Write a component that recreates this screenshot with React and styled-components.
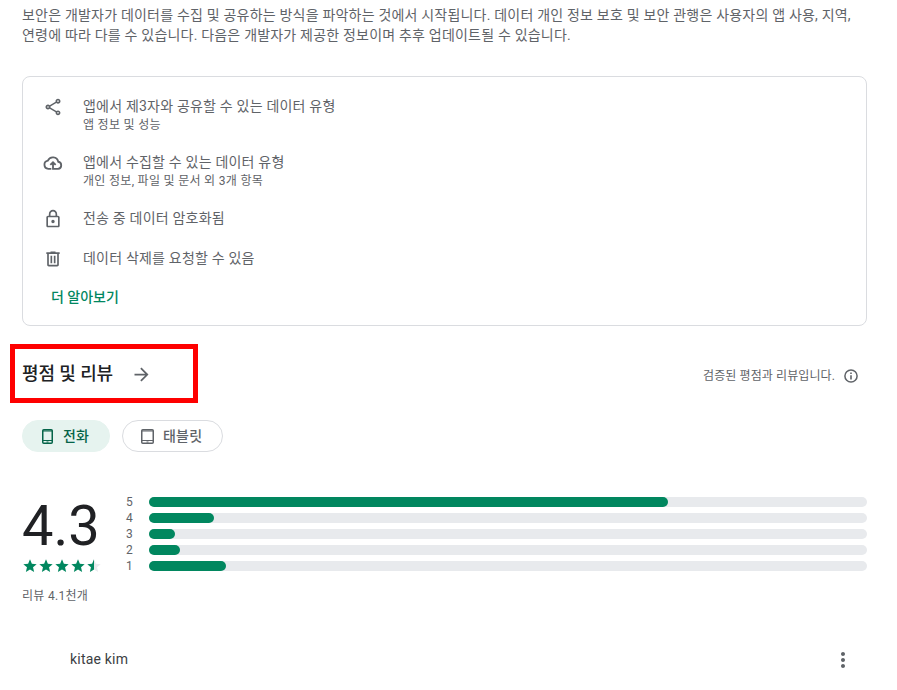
import React from "react";
import styled, { createGlobalStyle } from "styled-components";
import { MdArrowForward, MdMoreVert, MdOutlineShare } from "react-icons/md";

const CloudIcon = () => (
  <svg viewBox="0 0 24 24">
    <path
      d="M10 19H6.4a5 5 0 0 1-.6-9.9A6.6 6.6 0 0 1 18.3 10.500a4.300 4.300 0 0 1-.2 8.500H12v-7.500M8.800 14.300 12 11.100l3.200 3.200"
      fill="none"
      stroke="currentColor"
      strokeWidth="2.200"
    />
  </svg>
);

const LockIcon = () => (
  <svg viewBox="0 0 24 24">
    <path d="M18 8h-1V6c0-2.760-2.240-5-5-5S7 3.240 7 6v2H6c-1.100 0-2 .9-2 2v10c0 1.100.9 2 2 2h12c1.100 0 2-.9 2-2V10c0-1.100-.9-2-2-2zM9 6c0-1.660 1.340-3 3-3s3 1.340 3 3v2H9V6zm9 14H6V10h12v10zm-6-3c1.100 0 2-.9 2-2s-.9-2-2-2-2 .9-2 2 .9 2 2 2z" />
  </svg>
);

const TrashIcon = () => (
  <svg viewBox="0 0 24 24">
    <path d="M15 4V3H9v1H4v2h1v13c0 1.100.9 2 2 2h10c1.100 0 2-.9 2-2V6h1V4h-5zm2 15H7V6h10v13zM9 8h2v9H9V8zm4 0h2v9h-2V8z" />
  </svg>
);

const InfoIcon = () => (
  <svg viewBox="0 0 16 16">
    <circle
      cx="8"
      cy="8"
      r="6.100"
      fill="none"
      stroke="currentColor"
      strokeWidth="1.500"
    />
    <path d="M7.200 4.600h1.600v1.500H7.200zM7.200 7.200h1.600v4.200H7.200z" />
  </svg>
);

const DeviceIcon = ({ width }) => (
  <svg width={width} height="15" viewBox={`0 0 ${width} 15`}>
    <rect
      x="0.75"
      y="0.75"
      width={width - 1.5}
      height="13.5"
      rx="1"
      fill="none"
      stroke="currentColor"
      strokeWidth="1.5"
    />
    <path
      d={`M1 2h${width - 2}M1 11.500h${width - 2}`}
      stroke="currentColor"
      strokeWidth="1.200"
    />
    <path
      d={`M${width / 2 - 1} 13h2`}
      stroke="currentColor"
      strokeWidth="1"
    />
  </svg>
);

const STAR =
  "M12 17.270 18.180 21l-1.640-7.030L22 9.240l-7.190-.61L12 2 9.190 8.630 2 9.240l5.460 4.730L5.820 21z";

const Star = ({ half }) => (
  <svg width="16" height="16" viewBox="0 0 24 24">
    <path d={STAR} fill={half ? "#e8eaed" : "#01875f"} />
    {half && (
      <path
        d="M12 2v15.270L5.820 21l1.640-7.030L2 9.240l7.190-.61z"
        fill="#01875f"
      />
    )}
  </svg>
);

const safety = [
  {
    icon: <MdOutlineShare />,
    title: "앱에서 제3자와 공유할 수 있는 데이터 유형",
    detail: "앱 정보 및 성능",
  },
  {
    icon: <CloudIcon />,
    title: "앱에서 수집할 수 있는 데이터 유형",
    detail: "개인 정보, 파일 및 문서 외 3개 항목",
  },
  { icon: <LockIcon />, title: "전송 중 데이터 암호화됨" },
  { icon: <TrashIcon />, title: "데이터 삭제를 요청할 수 있음" },
];

const ratings = [
  { score: 5, share: 72.3 },
  { score: 4, share: 9.05 },
  { score: 3, share: 3.62 },
  { score: 2, share: 4.32 },
  { score: 1, share: 10.72 },
];

const App = () => {
  return (
    <Page>
      <GlobalStyle />
      <Intro>
        보안은 개발자가 데이터를 수집 및 공유하는 방식을 파악하는 것에서
        시작됩니다. 데이터 개인 정보 보호 및 보안 관행은 사용자의 앱 사용, 지역,
        <br />
        연령에 따라 다를 수 있습니다. 다음은 개발자가 제공한 정보이며 추후
        업데이트될 수 있습니다.
      </Intro>

      <SafetyCard>
        {safety.map(({ icon, title, detail }) => (
          <SafetyRow key={title}>
            <SafetyIcon>{icon}</SafetyIcon>
            <div>
              <p>{title}</p>
              {detail && <Detail>{detail}</Detail>}
            </div>
          </SafetyRow>
        ))}
        <MoreLink>더 알아보기</MoreLink>
      </SafetyCard>

      <ReviewHeader>
        <Heading>
          <h2>평점 및 리뷰</h2>
          <MdArrowForward />
          <Highlight />
        </Heading>
        <Verified>
          검증된 평점과 리뷰입니다.
          <InfoIcon />
        </Verified>
      </ReviewHeader>

      <Chips>
        <Chip $active>
          <DeviceIcon width={11} />
          전화
        </Chip>
        <Chip>
          <DeviceIcon width={13} />
          태블릿
        </Chip>
      </Chips>

      <Summary>
        <Overall>
          <Score>4.3</Score>
          <Stars>
            <Star />
            <Star />
            <Star />
            <Star />
            <Star half />
          </Stars>
          <Count>리뷰 4.1천개</Count>
        </Overall>
        <Bars>
          {ratings.map(({ score, share }) => (
            <BarRow key={score}>
              <span>{score}</span>
              <Track>
                <Fill style={{ width: `${share}%` }} />
              </Track>
            </BarRow>
          ))}
        </Bars>
      </Summary>

      <Review>
        <span>kitae kim</span>
        <MdMoreVert />
      </Review>
    </Page>
  );
};

export default App;

const GlobalStyle = createGlobalStyle`
  * {
    box-sizing: border-box;
    margin: 0;
  }

  body {
    background: #fff;
    color: #5f6368;
    font-family: Roboto, "Noto Sans CJK KR", sans-serif;
    font-size: 14px;
    line-height: 20px;
    letter-spacing: 0.2px;
    overflow: hidden;
  }

  svg {
    display: block;
    flex: none;
    fill: currentColor;
  }
`;

const Page = styled.main`
  width: 897px;
  height: 690px;
  padding: 5px 30px 0 22px;
`;

const Intro = styled.p`
  white-space: nowrap;
`;

const SafetyCard = styled.section`
  display: flex;
  flex-direction: column;
  gap: 20px;
  height: 250px;
  margin-top: 31px;
  padding: 19px 20px;
  border: 1px solid #dadce0;
  border-radius: 8px;
`;

const SafetyRow = styled.div`
  display: flex;
  gap: 20px;
`;

const SafetyIcon = styled.span`
  height: 20px;
  padding-top: 1px;

  svg {
    width: 20px;
    height: 20px;
  }
`;

const Detail = styled.p`
  padding-top: 2px;
  font-size: 12px;
  line-height: 14px;
  letter-spacing: 0.3px;
`;

const MoreLink = styled.a`
  margin: -1px 0 0 8px;
  color: #01875f;
  font-weight: 500;
  letter-spacing: 0;
`;

const ReviewHeader = styled.header`
  display: flex;
  justify-content: space-between;
  height: 59px;
  margin-top: 18px;
`;

const Heading = styled.div`
  position: relative;
  display: flex;
  align-items: center;
  gap: 18px;

  h2 {
    color: #202124;
    font-size: 18px;
    font-weight: 500;
    line-height: 24px;
    letter-spacing: -0.1px;
  }

  svg {
    width: 21px;
    height: 21px;
    margin-top: 1px;
  }
`;

const Highlight = styled.span`
  position: absolute;
  top: 0;
  left: -12px;
  width: 188px;
  height: 59px;
  border: 5px solid #fe0000;
`;

const Verified = styled.div`
  display: flex;
  align-items: center;
  gap: 8px;
  padding: 5px 8px 0 0;
  font-size: 12px;
  letter-spacing: 0.1px;

  svg {
    width: 16px;
    height: 16px;
  }
`;

const Chips = styled.div`
  display: flex;
  gap: 12px;
  margin-top: 17px;
`;

const Chip = styled.button`
  display: flex;
  align-items: center;
  gap: ${({ $active }) => ($active ? "10px" : "9px")};
  width: ${({ $active }) => ($active ? "88px" : "101px")};
  height: 32px;
  padding: 0 0 0 ${({ $active }) => ($active ? "19px" : "18px")};
  border: 1px solid ${({ $active }) => ($active ? "#e6f3ef" : "#dadce0")};
  border-radius: 16px;
  background: ${({ $active }) => ($active ? "#e6f3ef" : "#fff")};
  color: ${({ $active }) => ($active ? "#056449" : "#5f6368")};
  font: inherit;
  font-weight: 500;
  letter-spacing: 0.2px;
  white-space: nowrap;
`;

const Summary = styled.section`
  display: flex;
  margin-top: 42px;
`;

const Overall = styled.div`
  width: 104px;
`;

const Score = styled.div`
  color: #202124;
  font-size: 56px;
  line-height: 64px;
  letter-spacing: 0;
`;

const Stars = styled.div`
  display: flex;
`;

const Count = styled.p`
  margin-top: 14px;
  font-size: 12px;
  line-height: 16px;
  letter-spacing: 0.3px;
`;

const Bars = styled.div`
  flex: 1;
`;

const BarRow = styled.div`
  display: flex;
  align-items: center;
  height: 16px;
  font-size: 12px;

  span {
    width: 23px;
  }
`;

const Track = styled.div`
  flex: 1;
  height: 10px;
  border-radius: 5px;
  background: #e8eaed;
`;

const Fill = styled.div`
  height: 100%;
  border-radius: 5px;
  background: #01875f;
`;

const Review = styled.article`
  display: flex;
  align-items: center;
  justify-content: space-between;
  margin-top: 44px;
  padding: 0 12px 0 48px;
  color: #5f6368;

  span {
    padding-bottom: 2px;
    color: #3c4043;
  }

  svg {
    width: 24px;
    height: 24px;
  }
`;
